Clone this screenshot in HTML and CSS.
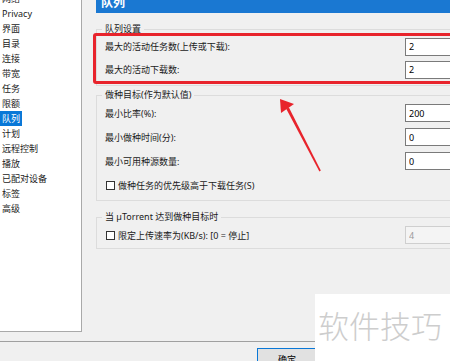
FILE: index.html
```html
<!DOCTYPE html>
<html lang="zh-CN">
<head>
    <meta charset="UTF-8">
    <meta name="viewport" content="width=device-width, initial-scale=1.0">
    <title>µTorrent 设置 - 队列</title>
    <link rel="stylesheet" href="styles.css">
</head>
<body>
    <div id="win">
        <div class="main">
            <ul class="tree">
                <li>网络</li>
                <li>Privacy</li>
                <li>界面</li>
                <li>目录</li>
                <li>连接</li>
                <li>带宽</li>
                <li>任务</li>
                <li>限额</li>
                <li><span class="on">队列</span></li>
                <li>计划</li>
                <li>远程控制</li>
                <li>播放</li>
                <li>已配对设备</li>
                <li>标签</li>
                <li>高级</li>
            </ul>
            <div class="pane">
                <div class="title">队列</div>
                <fieldset class="group g1">
                    <legend>队列设置</legend>
                    <div class="row"><span>最大的活动任务数(上传或下载):</span><input class="num" value="2"></div>
                    <div class="row"><span>最大的活动下载数:</span><input class="num" value="2"></div>
                </fieldset>
                <fieldset class="group g2">
                    <legend>做种目标(作为默认值)</legend>
                    <div class="row"><span>最小比率(%):</span><input class="num" value="200"></div>
                    <div class="row"><span>最小做种时间(分):</span><input class="num" value="0"></div>
                    <div class="row"><span>最小可用种源数量:</span><input class="num" value="0"></div>
                    <div class="row"><label class="chk"><i class="box"></i>做种任务的优先级高于下载任务(S)</label></div>
                </fieldset>
                <fieldset class="group g3">
                    <legend>当 µTorrent 达到做种目标时</legend>
                    <div class="row"><label class="chk"><i class="box"></i>限定上传速率为(KB/s): [0 = 停止]</label><input class="num off" value="4" disabled></div>
                </fieldset>
            </div>
        </div>
        <div class="footer">
            <button class="btn">确定</button>
        </div>
        <!-- 标注 -->
        <div class="mark"></div>
        <svg class="arrow" width="450" height="361" viewBox="0 0 450 361">
            <polygon points="280,99 294,104 281,113" fill="#e8242c"/>
            <polygon points="286.2,108.7 288.8,107.3 320.8,170.6 319.4,171.4" fill="#e8242c"/>
        </svg>
        <div class="watermark">软件技巧</div>
    </div>
</body>
</html>
```

FILE: styles.css
```css
* { margin: 0; padding: 0; box-sizing: border-box; }
body {
    width: 450px;
    height: 361px;
    overflow: hidden;
    background: #f0f0f0;
    font-family: "Noto Sans", "Noto Sans CJK SC", sans-serif;
    font-size: 9px;
    color: #1a1a1a;
}
#win {
    position: relative;
    width: 450px;
    height: 361px;
    overflow: hidden;
}
.main {
    display: flex;
    height: 341px;
}
.tree {
    list-style: none;
    flex: none;
    width: 82px;
    height: 332px;
    background: #fff;
    border-right: 1px solid #a9a9a9;
    border-bottom: 1px solid #a9a9a9;
    overflow: hidden;
}
.tree li {
    height: 15px;
    line-height: 15px;
    padding-left: 2px;
    white-space: nowrap;
}
.tree li:first-child { margin-top: -9px; }
.tree .on {
    display: inline-block;
    margin-left: -2px;
    padding: 0 2px;
    background: #0a78d7;
    color: #fff;
}
.pane {
    flex: none;
    width: 400px;
    padding-left: 14px;
}
.title {
    height: 20px;
    margin-top: -7px;
    line-height: 20px;
    padding-left: 5px;
    background: #1a78d2;
    color: #fff;
    font-size: 12px;
    font-weight: bold;
}
.group {
    border: 1px solid #dcdcdc;
    padding: 0 8px 4px 8px;
}
.group legend {
    padding: 0 3px;
    margin-left: -3px;
    line-height: 12px;
}
.g1 { margin-top: 10px; padding-bottom: 4px; }
.g2 { margin-top: 3px; padding-bottom: 3px; }
.g3 { margin-top: 10px; padding-bottom: 1px; }
.row {
    display: flex;
    align-items: center;
    justify-content: space-between;
    height: 24px;
}
.g1 .row { height: 23px; }
.num {
    flex: none;
    width: 68px;
    height: 18px;
    padding: 0 3px;
    border: 1px solid #7a7a7a;
    background: #fff;
    font: inherit;
    color: #000;
    outline: none;
}
.num.off {
    border-color: #cfcfcf;
    background: #f4f4f4;
    color: #9a9a9a;
}
.chk {
    display: flex;
    align-items: center;
    gap: 3px;
    margin-left: 1px;
}
.box {
    display: block;
    width: 9px;
    height: 9px;
    border: 1px solid #333;
    background: #fff;
}
.footer {
    height: 20px;
    border-top: 1px solid #a0a0a0;
    padding: 6px 0 0 257px;
}
.btn {
    display: block;
    width: 60px;
    height: 20px;
    border: 1px solid #0a78d7;
    background: #e1e1e1;
    font: inherit;
    padding-top: 3px;
    line-height: 12px;
    color: #000;
}
.mark {
    position: absolute;
    left: 93px;
    top: 33px;
    width: 380px;
    height: 51px;
    border: 3px solid #e8242c;
    border-radius: 3px;
}
.arrow {
    position: absolute;
    left: 0;
    top: 0;
}
.watermark {
    position: absolute;
    left: 315px;
    top: 294px;
    width: 135px;
    height: 67px;
    background: #fff;
    padding: 14px 0 0 3px;
    font-size: 31px;
    line-height: 36px;
    font-weight: 300;
    color: #cdcdcd;
    white-space: nowrap;
}
```
